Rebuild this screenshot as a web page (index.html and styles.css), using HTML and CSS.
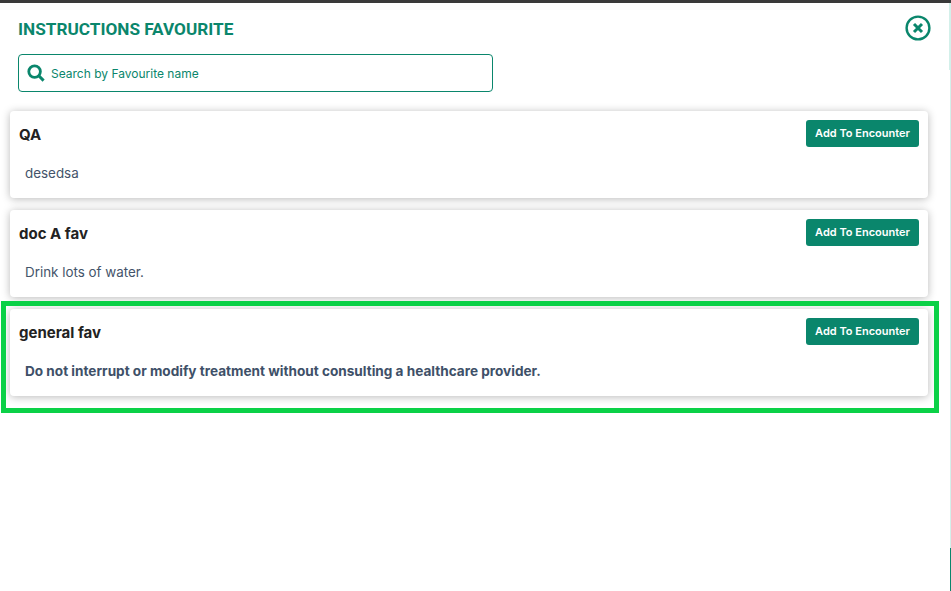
FILE: index.html
```html
<!DOCTYPE html>
<html lang="en">
<head>
    <meta charset="UTF-8">
    <meta name="viewport" content="width=device-width, initial-scale=1.0">
    <title>Instructions Favourite</title>
    <link rel="stylesheet" href="styles.css">
</head>
<body>
    <div class="panel">
        <div class="panel-head">
            <h1 class="panel-title">INSTRUCTIONS FAVOURITE</h1>
            <button class="close-btn" type="button" aria-label="Close">
                <svg width="26" height="26" viewBox="0 0 26 26" fill="none" stroke="#0a866c">
                    <circle cx="13" cy="13" r="11.4" stroke-width="2.4"/>
                    <path d="M9 9l8 8M17 9l-8 8" stroke-width="3"/>
                </svg>
            </button>
        </div>

        <label class="search">
            <svg width="18" height="18" viewBox="0 0 18 18" fill="none" stroke="#0a866c">
                <circle cx="7.6" cy="7.6" r="5.8" stroke-width="2.8"/>
                <path d="M11.8 11.8l4.8 4.8" stroke-width="3"/>
            </svg>
            <input class="search-input" type="text" placeholder="Search by Favourite name">
        </label>

        <div class="fav-list">
            <div class="fav-card">
                <div class="fav-top">
                    <span class="fav-name">QA</span>
                    <button class="add-btn" type="button">Add To Encounter</button>
                </div>
                <p class="fav-text">desedsa</p>
            </div>
            <div class="fav-card">
                <div class="fav-top">
                    <span class="fav-name">doc A fav</span>
                    <button class="add-btn" type="button">Add To Encounter</button>
                </div>
                <p class="fav-text">Drink lots of water.</p>
            </div>
            <div class="fav-card">
                <div class="fav-top">
                    <span class="fav-name">general fav</span>
                    <button class="add-btn" type="button">Add To Encounter</button>
                </div>
                <p class="fav-text fav-text-bold">Do not interrupt or modify treatment without consulting a healthcare provider.</p>
                <span class="highlight"></span>
            </div>
        </div>
    </div>
    <div class="scrollbar"></div>
</body>
</html>
```

FILE: styles.css
```css
html, body {
    height: 100%;
}
body {
    display: flex;
    margin: 0;
    background-color: #fff;
    font-family: Inter, "Liberation Sans", sans-serif;
    overflow: hidden;
}
.panel {
    flex: 1;
    box-sizing: border-box;
    height: 100%;
    padding: 0 21px 0 10px;
    border-top: 3px solid #3a3a3a;
}
.panel-head {
    display: flex;
    align-items: center;
    justify-content: space-between;
    height: 51px;
    padding-left: 8px;
    margin-right: -3px;
}
.panel-title {
    margin: 0;
    font-family: Roboto, sans-serif;
    font-size: 17.2px;
    font-weight: 700;
    color: #0a866c;
}
.close-btn {
    display: flex;
    margin: 0 0 2px;
    padding: 0;
    background: none;
    border: none;
}
.search {
    display: flex;
    align-items: center;
    gap: 6px;
    box-sizing: border-box;
    width: 475px;
    height: 38px;
    margin-left: 8px;
    padding: 0 8px;
    border: 1px solid #0a866c;
    border-radius: 4px;
}
.search-input {
    flex: 1;
    padding: 0;
    border: none;
    outline: none;
    font-family: inherit;
    font-size: 12px;
}
.search-input::placeholder {
    color: #0a866c;
    opacity: 1;
}
.fav-list {
    display: flex;
    flex-direction: column;
    gap: 12px;
    margin-top: 19px;
}
.fav-card {
    position: relative;
    box-sizing: border-box;
    height: 87px;
    padding: 9px 9px 0;
    border-radius: 4px;
    box-shadow: 0 1px 9px rgba(0, 0, 0, 0.28);
}
.fav-top {
    display: flex;
    align-items: center;
    justify-content: space-between;
}
.fav-name {
    padding-top: 2px;
    font-size: 15px;
    font-weight: 700;
    color: #222;
}
.add-btn {
    width: 113px;
    height: 27px;
    padding: 0 0 1px;
    background-color: #0a866c;
    border: none;
    border-radius: 3px;
    color: #fff;
    font-family: Inter, "Liberation Sans", sans-serif;
    font-size: 11px;
    font-weight: 600;
}
.fav-text {
    margin: 17px 0 0 6px;
    font-size: 13.4px;
    line-height: 18px;
    color: #44546a;
}
.fav-text-bold {
    font-size: 13.6px;
    font-weight: 700;
    color: #3e5068;
}
/* green box drawn over the last card */
.highlight {
    position: absolute;
    top: -8px;
    left: -9px;
    width: 938px;
    height: 112px;
    box-sizing: border-box;
    border: 5px solid #0bd147;
}
.scrollbar {
    width: 2px;
    height: 100%;
    background:
        linear-gradient(#3a3a3a 3px, #d3f0ea 3px) left top / 1px 70px no-repeat,
        linear-gradient(#3a3a3a 3px, #d3f0ea 3px, #d3f0ea 548px, #0a866c 548px) right top / 1px 100% no-repeat;
}
```
